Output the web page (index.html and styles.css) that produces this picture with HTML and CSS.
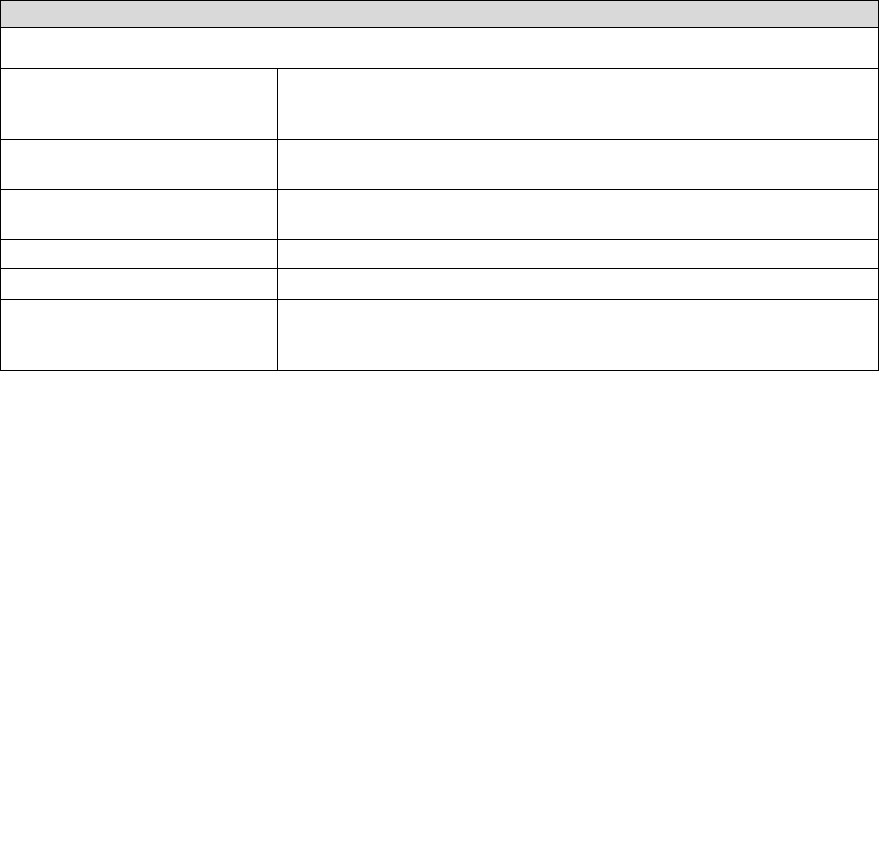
FILE: index.html
```html
<!DOCTYPE html>
<html lang="en">
<head>
    <meta charset="UTF-8">
    <meta name="viewport" content="width=device-width, initial-scale=1.0">
    <title>Form</title>
    <link rel="stylesheet" href="styles.css">
</head>
<body>

    <!-- blank form table -->
    <table class="form-table">
        <colgroup>
            <col class="col-label">
            <col class="col-value">
        </colgroup>
        <tr class="row-head"><th colspan="2"></th></tr>
        <tr class="row-intro"><td colspan="2"></td></tr>
        <tr class="row-tall"><td></td><td></td></tr>
        <tr class="row-mid"><td></td><td></td></tr>
        <tr class="row-mid"><td></td><td></td></tr>
        <tr class="row-short"><td></td><td></td></tr>
        <tr class="row-small"><td></td><td></td></tr>
        <tr class="row-tall"><td></td><td></td></tr>
    </table>

</body>
</html>
```

FILE: styles.css
```css
* { margin: 0; padding: 0; box-sizing: border-box; }
body {
    background: white;
    font-family: 'Liberation Sans', Arial, sans-serif;
    font-size: 14px;
}

.form-table {
    width: 878px;
    border-collapse: collapse;
    table-layout: fixed;
}

.col-label { width: 277px; }
.col-value { width: 601px; }

.form-table th,
.form-table td {
    border: 1px solid black;
    padding: 0 5px;
}

.form-table th {
    background: #d9d9d9;
}

.row-head { height: 27px; }
.row-intro { height: 41px; }
.row-tall { height: 71px; }
.row-mid { height: 50px; }
.row-short { height: 29px; }
.row-small { height: 31px; }
```
